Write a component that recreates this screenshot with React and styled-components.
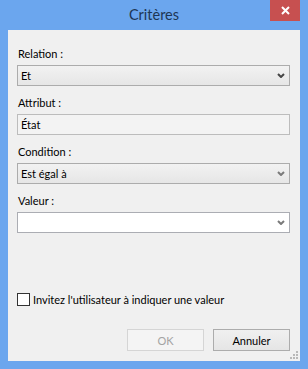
import React from 'react';
import styled, { createGlobalStyle } from 'styled-components';

const GlobalStyle = createGlobalStyle`
  html, body {
    margin: 0;
    padding: 0;
    background: #6ba6ee;
  }
  body {
    font-family: Lato, "Noto Sans", sans-serif;
    font-size: 11px;
    color: #000;
  }
`;

const fields = [
  { id: 1, label: 'Relation :', value: 'Et', kind: 'combo', arrow: '#454545' },
  { id: 2, label: 'Attribut :', value: 'État', kind: 'text' },
  { id: 3, label: 'Condition :', value: 'Est égal à', kind: 'combo', arrow: '#7a7a7a' },
  { id: 4, label: 'Valeur :', value: '', kind: 'edit', arrow: '#7a7a7a' }
];

const Frame = styled.div`
  width: 308px;
  height: 369px;
  box-sizing: border-box;
  background: #6ba6ee;
  display: flex;
  flex-direction: column;
  padding: 0 8px 8px 8px;
`;

const TitleBar = styled.div`
  height: 30px;
  display: flex;
  align-items: center;
  justify-content: center;
  position: relative;
`;

const Title = styled.span`
  font-family: Lato, "Noto Sans", sans-serif;
  font-size: 14.5px;
  color: #1d3654;
  margin-top: -1px;
`;

const CloseButton = styled.div`
  position: absolute;
  top: 0;
  right: 0;
  width: 30px;
  height: 21px;
  background: #c75050;
  display: flex;
  align-items: center;
  justify-content: center;
`;

const Client = styled.div`
  flex: 1;
  background: #f0f0f0;
  display: flex;
  flex-direction: column;
  padding: 17px 10px 10px 9px;
  position: relative;
`;

const Form = styled.div`
  display: flex;
  flex-direction: column;
  gap: 10px;
`;

const Group = styled.div`
  display: flex;
  flex-direction: column;
`;

const Label = styled.div`
  line-height: 14px;
  margin-bottom: 4px;
  padding-left: 1px;
`;

const Box = styled.div`
  height: 21px;
  box-sizing: border-box;
  display: flex;
  align-items: center;
  padding: 0 4px 0 3px;
  border: 1px solid ${p => (p.kind === 'combo' ? '#acacac' : p.kind === 'edit' ? '#abadb3' : '#bcbcbc')};
  background: ${p =>
    p.kind === 'combo'
      ? 'linear-gradient(#f2f2f2, #e6e6e6)'
      : p.kind === 'edit'
      ? '#ffffff'
      : '#f3f3f3'};
`;

const BoxText = styled.span`
  flex: 1;
  white-space: nowrap;
`;

const Arrow = styled.svg`
  width: 8px;
  height: 5px;
  flex: none;
`;

const CheckRow = styled.label`
  margin-top: auto;
  display: flex;
  align-items: center;
  gap: 3px;
`;

const CheckBox = styled.span`
  width: 13px;
  height: 13px;
  box-sizing: border-box;
  border: 1px solid #333333;
  background: #ffffff;
  flex: none;
`;

const Buttons = styled.div`
  display: flex;
  justify-content: flex-end;
  gap: 9px;
  margin-top: 23px;
`;

const Button = styled.div`
  width: 77px;
  height: 22px;
  box-sizing: border-box;
  display: flex;
  align-items: center;
  justify-content: center;
  border: 1px solid ${p => (p.disabled ? '#d5d5d5' : '#acacac')};
  background: ${p => (p.disabled ? '#f4f4f4' : 'linear-gradient(#f0f0f0, #e5e5e5)')};
  color: ${p => (p.disabled ? '#a3a3a3' : '#000')};
`;

const Grip = styled.svg`
  position: absolute;
  right: 2px;
  bottom: 2px;
  width: 8px;
  height: 8px;
`;

function Chevron({ color }) {
  return (
    <Arrow viewBox="0 0 8 5">
      <path d="M1 1 L4 4 L7 1" fill="none" stroke={color} strokeWidth="2" />
    </Arrow>
  );
}

export default function App() {
  return (
    <>
      <GlobalStyle />
      <Frame>
        <TitleBar>
          <Title>Critères</Title>
          <CloseButton>
            <svg width="9" height="9" viewBox="0 0 9 9">
              <path d="M1 1 L8 8 M8 1 L1 8" stroke="#ffffff" strokeWidth="2" />
            </svg>
          </CloseButton>
        </TitleBar>
        <Client>
          <Form>
            {fields.map(f => (
              <Group key={f.id}>
                <Label>{f.label}</Label>
                <Box kind={f.kind}>
                  <BoxText>{f.value}</BoxText>
                  {f.kind !== 'text' && <Chevron color={f.arrow} />}
                </Box>
              </Group>
            ))}
          </Form>
          <CheckRow>
            <CheckBox />
            <span>Invitez l'utilisateur à indiquer une valeur</span>
          </CheckRow>
          <Buttons>
            <Button disabled>OK</Button>
            <Button>Annuler</Button>
          </Buttons>
          <Grip viewBox="0 0 8 8">
            <rect x="6" y="0" width="2" height="2" fill="#b8b8b8" />
            <rect x="3" y="3" width="2" height="2" fill="#b8b8b8" />
            <rect x="6" y="3" width="2" height="2" fill="#b8b8b8" />
            <rect x="0" y="6" width="2" height="2" fill="#b8b8b8" />
            <rect x="3" y="6" width="2" height="2" fill="#b8b8b8" />
            <rect x="6" y="6" width="2" height="2" fill="#b8b8b8" />
          </Grip>
        </Client>
      </Frame>
    </>
  );
}
